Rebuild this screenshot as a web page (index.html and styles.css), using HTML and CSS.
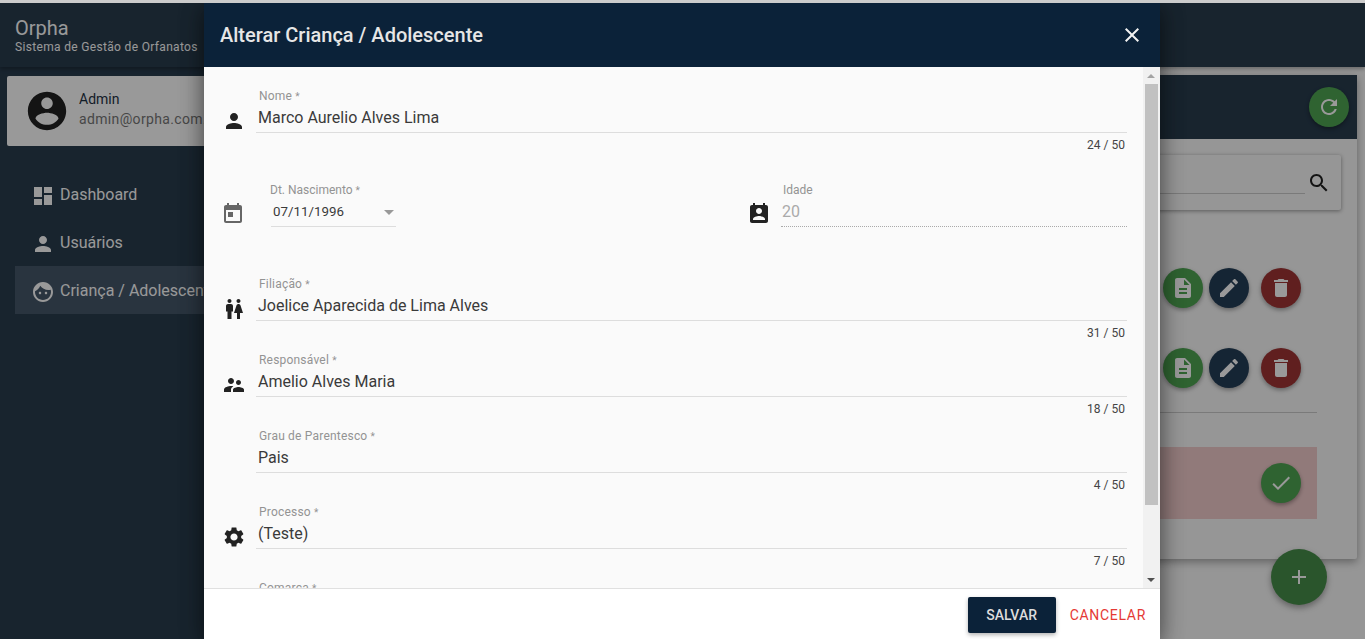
FILE: index.html
```html
<!DOCTYPE html>
<html lang="pt-BR">
<head>
<meta charset="utf-8">
<title>Orpha</title>
<link rel="stylesheet" href="styles.css">
</head>
<body>
<div class="strip"></div>
<div class="app">
  <header class="toolbar">
    <div class="brand">Orpha</div>
    <div class="tagline">Sistema de Gestão de Orfanatos</div>
  </header>
  <div class="shell">
    <aside class="sidebar">
      <div class="user">
        <svg class="avatar" viewBox="0 0 24 24"><path d="M12 2C6.48 2 2 6.48 2 12s4.48 10 10 10 10-4.48 10-10S17.52 2 12 2zm0 3c1.66 0 3 1.34 3 3s-1.34 3-3 3-3-1.34-3-3 1.34-3 3-3zm0 14.2c-2.5 0-4.71-1.28-6-3.22.03-1.99 4-3.08 6-3.08 1.99 0 5.97 1.09 6 3.08-1.29 1.94-3.5 3.22-6 3.22z"/></svg>
        <div class="user-text">
          <div class="user-name">Admin</div>
          <div class="user-mail">admin@orpha.com.br</div>
        </div>
      </div>
      <nav class="menu">
        <div class="menu-item"><svg class="menu-icon" viewBox="0 0 24 24"><path d="M3 13h8V3H3v10zm0 8h8v-6H3v6zm10 0h8V11h-8v10zm0-18v6h8V3h-8z"/></svg>Dashboard</div>
        <div class="menu-item"><svg class="menu-icon" viewBox="0 0 24 24"><path d="M12 12c2.21 0 4-1.79 4-4s-1.79-4-4-4-4 1.79-4 4 1.79 4 4 4zm0 2c-2.67 0-8 1.34-8 4v2h16v-2c0-2.66-5.33-4-8-4z"/></svg>Usuários</div>
        <div class="menu-item active"><svg class="menu-icon" viewBox="0 0 24 24"><path d="M9 11.75c-.69 0-1.25.56-1.25 1.25s.56 1.25 1.25 1.25 1.25-.56 1.25-1.25-.56-1.25-1.25-1.25zm6 0c-.69 0-1.25.56-1.25 1.25s.56 1.25 1.25 1.25 1.25-.56 1.25-1.25-.56-1.25-1.25-1.25zM12 2C6.48 2 2 6.48 2 12s4.48 10 10 10 10-4.48 10-10S17.52 2 12 2zm0 18c-4.41 0-8-3.59-8-8 0-.29.02-.58.05-.86 2.36-1.05 4.23-2.98 5.21-5.37C11.07 8.33 14.05 10 17.42 10c.78 0 1.53-.09 2.25-.26.21.71.33 1.47.33 2.26 0 4.41-3.59 8-8 8z"/></svg>Criança / Adolescente</div>
      </nav>
    </aside>
    <main class="main">
      <section class="card">
        <div class="card-head">
          <button class="fab-sm green"><svg viewBox="0 0 24 24"><path d="M17.65 6.35C16.2 4.9 14.21 4 12 4c-4.42 0-7.99 3.58-7.99 8s3.57 8 7.99 8c3.73 0 6.84-2.55 7.73-6h-2.08c-.82 2.33-3.04 4-5.65 4-3.31 0-6-2.69-6-6s2.69-6 6-6c1.66 0 3.14.69 4.22 1.78L13 11h7V4l-2.35 2.35z"/></svg></button>
        </div>
        <div class="search">
          <div class="search-line"></div>
          <svg class="search-icon" viewBox="0 0 24 24"><path d="M15.5 14h-.79l-.28-.27C15.41 12.59 16 11.11 16 9.5 16 5.91 13.09 3 9.5 3S3 5.91 3 9.5 5.91 16 9.5 16c1.61 0 3.09-.59 4.23-1.57l.27.28v.79l5 4.99L20.49 19l-4.99-5zm-6 0C7.01 14 5 11.99 5 9.5S7.01 5 9.5 5 14 7.01 14 9.5 11.99 14 9.5 14z"/></svg>
        </div>
        <div class="table-row">
          <button class="fab-sm green"><svg viewBox="0 0 24 24"><path d="M14 2H6c-1.1 0-1.99.9-1.99 2L4 20c0 1.1.89 2 1.99 2H18c1.1 0 2-.9 2-2V8l-6-6zm2 16H8v-2h8v2zm0-4H8v-2h8v2zm-3-5V3.5L18.5 9H13z"/></svg></button>
          <button class="fab-sm navy"><svg viewBox="0 0 24 24"><path d="M3 17.25V21h3.75L17.81 9.94l-3.75-3.75L3 17.25zM20.71 7.04c.39-.39.39-1.02 0-1.41l-2.34-2.34c-.39-.39-1.02-.39-1.41 0l-1.83 1.83 3.75 3.75 1.83-1.83z"/></svg></button>
          <button class="fab-sm red"><svg viewBox="0 0 24 24"><path d="M6 19c0 1.1.9 2 2 2h8c1.1 0 2-.9 2-2V7H6v12zM19 4h-3.5l-1-1h-5l-1 1H5v2h14V4z"/></svg></button>
        </div>
        <div class="table-row last">
          <button class="fab-sm green"><svg viewBox="0 0 24 24"><path d="M14 2H6c-1.1 0-1.99.9-1.99 2L4 20c0 1.1.89 2 1.99 2H18c1.1 0 2-.9 2-2V8l-6-6zm2 16H8v-2h8v2zm0-4H8v-2h8v2zm-3-5V3.5L18.5 9H13z"/></svg></button>
          <button class="fab-sm navy"><svg viewBox="0 0 24 24"><path d="M3 17.25V21h3.75L17.81 9.94l-3.75-3.75L3 17.25zM20.71 7.04c.39-.39.39-1.02 0-1.41l-2.34-2.34c-.39-.39-1.02-.39-1.41 0l-1.83 1.83 3.75 3.75 1.83-1.83z"/></svg></button>
          <button class="fab-sm red"><svg viewBox="0 0 24 24"><path d="M6 19c0 1.1.9 2 2 2h8c1.1 0 2-.9 2-2V7H6v12zM19 4h-3.5l-1-1h-5l-1 1H5v2h14V4z"/></svg></button>
        </div>
        <div class="alert-row">
          <button class="fab-sm green"><svg viewBox="0 0 24 24"><path d="M9 16.17L4.83 12l-1.42 1.41L9 19 21 7l-1.41-1.41z"/></svg></button>
        </div>
      </section>
    </main>
  </div>
  <button class="fab-add"><svg viewBox="0 0 24 24"><path d="M19 13h-6v6h-2v-6H5v-2h6V5h2v6h6v2z"/></svg></button>
  <div class="backdrop"></div>
  <div class="dialog">
    <div class="dialog-head">
      <h1 class="dialog-title">Alterar Criança / Adolescente</h1>
      <svg class="close" viewBox="0 0 24 24"><path d="M19 6.41L17.59 5 12 10.59 6.41 5 5 6.41 10.59 12 5 17.59 6.41 19 12 13.41 17.59 19 19 17.59 13.41 12z"/></svg>
    </div>
    <div class="dialog-body">
      <form class="form">
        <div class="row">
          <svg class="icon" viewBox="0 0 24 24"><path d="M12 12c2.21 0 4-1.79 4-4s-1.79-4-4-4-4 1.79-4 4 1.79 4 4 4zm0 2c-2.67 0-8 1.34-8 4v2h16v-2c0-2.66-5.33-4-8-4z"/></svg>
          <div class="field">
            <div class="label">Nome <span class="req">*</span></div>
            <div class="value">Marco Aurelio Alves Lima</div>
            <div class="count">24 / 50</div>
          </div>
        </div>
        <div class="row-date">
          <div class="group-date">
            <svg class="icon icon-cal" viewBox="0 0 24 24"><path d="M19 3h-1V1h-2v2H8V1H6v2H5c-1.11 0-1.99.9-1.99 2L3 19c0 1.1.89 2 2 2h14c1.1 0 2-.9 2-2V5c0-1.1-.9-2-2-2zm0 16H5V8h14v11zM7 10h5v5H7z"/></svg>
            <div class="field-date">
              <div class="label">Dt. Nascimento <span class="req">*</span></div>
              <div class="value value-date">07/11/1996<span class="caret"></span></div>
            </div>
          </div>
          <div class="group-age">
            <svg class="icon" viewBox="0 0 24 24"><path d="M19 3h-1V1h-2v2H8V1H6v2H5c-1.11 0-2 .9-2 2v14c0 1.1.89 2 2 2h14c1.1 0 2-.9 2-2V5c0-1.1-.9-2-2-2zm-7 3c1.66 0 3 1.34 3 3s-1.34 3-3 3-3-1.34-3-3 1.34-3 3-3zm6 12H6v-1c0-2 4-3.1 6-3.1s6 1.1 6 3.1v1z"/></svg>
            <div class="field-age">
              <div class="label">Idade</div>
              <div class="value value-age">20</div>
            </div>
          </div>
        </div>
        <div class="row">
          <svg class="icon" viewBox="0 0 24 24"><path d="M5.5 22v-7.5H4V9c0-1.1.9-2 2-2h3c1.1 0 2 .9 2 2v5.5H9.5V22h-4zM18 22v-6h3l-2.54-7.63C18.18 7.55 17.42 7 16.56 7h-.12c-.86 0-1.63.55-1.9 1.37L12 16h3v6h3zM7.5 6c1.11 0 2-.89 2-2s-.89-2-2-2-2 .89-2 2 .89 2 2 2zm9 0c1.11 0 2-.89 2-2s-.89-2-2-2-2 .89-2 2 .89 2 2 2z"/></svg>
          <div class="field">
            <div class="label">Filiação <span class="req">*</span></div>
            <div class="value">Joelice Aparecida de Lima Alves</div>
            <div class="count">31 / 50</div>
          </div>
        </div>
        <div class="row">
          <svg class="icon" viewBox="0 0 24 24"><path d="M16.5 12c1.38 0 2.49-1.12 2.49-2.5S17.88 7 16.5 7C15.12 7 14 8.12 14 9.5s1.12 2.5 2.5 2.5zM9 11c1.66 0 2.99-1.34 2.99-3S10.66 5 9 5C7.34 5 6 6.34 6 8s1.34 3 3 3zm7.5 3c-1.83 0-5.5.92-5.5 2.75V19h11v-2.25c0-1.83-3.67-2.75-5.5-2.75zM9 13c-2.33 0-7 1.17-7 3.5V19h7v-2.25c0-.85.33-2.34 2.37-3.47C10.5 13.1 9.66 13 9 13z"/></svg>
          <div class="field">
            <div class="label">Responsável <span class="req">*</span></div>
            <div class="value">Amelio Alves Maria</div>
            <div class="count">18 / 50</div>
          </div>
        </div>
        <div class="row">
          <div class="icon"></div>
          <div class="field">
            <div class="label">Grau de Parentesco <span class="req">*</span></div>
            <div class="value">Pais</div>
            <div class="count">4 / 50</div>
          </div>
        </div>
        <div class="row">
          <svg class="icon" viewBox="0 0 24 24"><path d="M19.14 12.94c.04-.3.06-.61.06-.94 0-.32-.02-.64-.07-.94l2.03-1.58c.18-.14.23-.41.12-.61l-1.92-3.32c-.12-.22-.37-.29-.59-.22l-2.39.96c-.5-.38-1.03-.7-1.62-.94l-.36-2.54c-.04-.24-.24-.41-.48-.41h-3.84c-.24 0-.43.17-.47.41l-.36 2.54c-.59.24-1.13.57-1.62.94l-2.39-.96c-.22-.08-.47 0-.59.22L2.74 8.87c-.12.21-.08.47.12.61l2.03 1.58c-.05.3-.09.63-.09.94s.02.64.07.94l-2.03 1.58c-.18.14-.23.41-.12.61l1.92 3.32c.12.22.37.29.59.22l2.39-.96c.5.38 1.03.7 1.62.94l.36 2.54c.05.24.24.41.48.41h3.84c.24 0 .44-.17.47-.41l.36-2.54c.59-.24 1.13-.56 1.62-.94l2.39.96c.22.08.47 0 .59-.22l1.92-3.32c.12-.22.07-.47-.12-.61l-2.01-1.58zM12 15.6c-1.98 0-3.6-1.62-3.6-3.6s1.62-3.6 3.6-3.6 3.6 1.62 3.6 3.6-1.62 3.6-3.6 3.6z"/></svg>
          <div class="field">
            <div class="label">Processo <span class="req">*</span></div>
            <div class="value">(Teste)</div>
            <div class="count">7 / 50</div>
          </div>
        </div>
        <div class="row">
          <div class="icon"></div>
          <div class="field">
            <div class="label">Comarca <span class="req">*</span></div>
          </div>
        </div>
      </form>
      <div class="scrollbar">
        <div class="sb-btn"><span class="sb-up"></span></div>
        <div class="sb-thumb"></div>
        <div class="sb-rest"></div>
        <div class="sb-btn"><span class="sb-down"></span></div>
      </div>
    </div>
    <div class="dialog-foot">
      <button class="btn-save">SALVAR</button>
      <button class="btn-cancel">CANCELAR</button>
    </div>
  </div>
</div>
</body>
</html>
```
FILE: styles.css
```css
* { box-sizing: border-box; }
html, body { margin: 0; padding: 0; height: 100%; overflow: hidden; }
body { font-family: Roboto, "Liberation Sans", sans-serif; background: #fafafa; }
button { font-family: inherit; border: 0; padding: 0; cursor: pointer; }

.strip { height: 3px; background: #ccc; }
.app { position: relative; height: 636px; overflow: hidden; display: flex; flex-direction: column; background: #fafafa; }

.toolbar { height: 64px; flex: none; background: #283c4e; color: #fff; padding: 14px 15px 0; box-shadow: 0 2px 4px rgba(0,0,0,.3); position: relative; z-index: 1; }
.brand { font-size: 20px; line-height: 22px; }
.tagline { font-size: 12px; line-height: 14px; margin-top: 1px; letter-spacing: .33px; }

.shell { flex: 1; display: flex; min-height: 0; }
.sidebar { width: 260px; flex: none; background: #283c4e; padding: 9px 0 0 7px; }
.user { height: 70px; background: #fff; border-radius: 2px; display: flex; align-items: center; padding-left: 17px; margin-right: 8px; }
.avatar { width: 46px; height: 46px; fill: #222; flex: none; }
.user-text { margin: -4px 0 0 9px; }
.user-name { font-size: 14px; line-height: 20px; color: #1f3244; }
.user-mail { font-size: 14px; line-height: 20px; color: #777; letter-spacing: .35px; white-space: nowrap; }
.menu { margin: 24px 0 0 8px; }
.menu-item { height: 48px; display: flex; align-items: center; color: #fff; font-size: 16px; padding-left: 16px; }
.menu-item.active { background: #45576a; }
.menu-icon { width: 24px; height: 24px; fill: #fff; margin-right: 5px; margin-top: 4px; flex: none; }

.main { flex: 1; padding: 8px 8px 0 0; min-width: 0; }
.card { height: 484px; background: #fafafa; border-radius: 2px; box-shadow: 0 3px 8px rgba(0,0,0,.35); }
.card-head { height: 64px; background: #283c4e; display: flex; justify-content: flex-end; align-items: center; padding-right: 8px; }
.search { height: 55px; margin: 16px 16px 0 16px; background: #fafafa; border-radius: 2px; box-shadow: 0 1px 4px rgba(0,0,0,.4); display: flex; align-items: center; padding-right: 10px; }
.search-line { flex: 1; height: 1px; background: #ccc; margin: 22px 1px 0 0; }
.search-icon { width: 24px; height: 24px; fill: #222; margin-left: 1px; }
.table-row { height: 80px; margin: 38px 40px 0 0; padding-right: 16px; display: flex; justify-content: flex-end; align-items: center; gap: 6px; }
.table-row + .table-row { margin-top: 0; height: 85px; padding-bottom: 5px; border-bottom: 1px solid #ccc; }
.alert-row { height: 72px; margin: 34px 40px 0 0; padding-right: 16px; background: #f2cccc; display: flex; justify-content: flex-end; align-items: center; }
.fab-sm { width: 40px; height: 40px; border-radius: 50%; display: flex; align-items: center; justify-content: center; box-shadow: 0 2px 4px rgba(0,0,0,.35); flex: none; }
.fab-sm svg { width: 24px; height: 24px; fill: #fff; }
.fab-sm.green { background: #4fa553; }
.fab-sm.navy { background: #243e58; }
.fab-sm.red { background: #a03434; margin-left: 6px; }

.fab-add { position: absolute; left: 1271px; top: 546px; width: 56px; height: 56px; border-radius: 50%; background: #478e4a; display: flex; align-items: center; justify-content: center; box-shadow: 0 3px 6px rgba(0,0,0,.35); }
.fab-add svg { width: 24px; height: 24px; fill: #fff; }

.backdrop { position: absolute; inset: 0; background: rgba(0,0,0,.4); z-index: 2; }
.dialog { position: absolute; left: 204px; top: 0; width: 956px; height: 636px; z-index: 3; display: flex; flex-direction: column; background: #fff; box-shadow: 0 8px 20px rgba(0,0,0,.4), 0 0 24px rgba(0,0,0,.25); }
.dialog-head { height: 64px; flex: none; background: #0b2239; color: #e6e6e6; display: flex; align-items: center; justify-content: space-between; padding: 0 16px; }
.dialog-title { margin: 0; font-size: 20px; font-weight: 500; }
.close { width: 24px; height: 24px; fill: #f2f2f2; }

.dialog-body { flex: 1; min-height: 0; display: flex; background: #fafafa; }
.form { flex: 1; min-width: 0; overflow: hidden; padding: 16px 16px 0 18px; }
.row { height: 76px; display: flex; gap: 10px; }
.icon { width: 24px; height: 24px; flex: none; fill: #222; margin-top: 26px; }
.icon-cal { fill: #666; margin-top: 43px; margin-left: -1px; }
.field { flex: 1; min-width: 0; }
.label { margin: 6px 0 0 3px; font-size: 12px; line-height: 14px; color: #939393; letter-spacing: .2px; }
.req { font-size: 10px; line-height: 0; letter-spacing: 0; }
.value { height: 30px; border-bottom: 1px solid #ddd; padding: 4px 2px 0; font-size: 16px; line-height: 22px; color: #3a3a3a; }
.count { font-size: 12px; line-height: 12px; margin-top: 6px; padding-right: 2px; text-align: right; color: #444; }

.row-date { height: 112px; display: flex; }
.group-date { width: 525px; display: flex; }
.field-date { width: 125px; margin-left: 26px; padding-top: 18px; }
.field-date .label { margin-left: -1px; letter-spacing: 0; }
.value-date { position: relative; padding: 4px 2px 0; font-size: 13.333px; }
.caret { position: absolute; right: 2px; top: 13px; width: 0; height: 0; border: 5px solid transparent; border-top-color: #999; border-bottom: 0; }
.group-age { flex: 1; display: flex; gap: 10px; }
.group-age .icon { margin-top: 43px; }
.field-age { flex: 1; padding-top: 18px; }
.field-age .label { margin-left: 2px; letter-spacing: 0; }
.value-age { color: #aaa; border-bottom: 1px dotted #aaa; padding-left: 1px; }

.scrollbar { width: 17px; flex: none; display: flex; flex-direction: column; background: #f1f1f1; }
.sb-btn { height: 17px; flex: none; display: flex; align-items: center; justify-content: center; padding-right: 1px; }
.sb-up, .sb-down { width: 0; height: 0; border: 4px solid transparent; }
.sb-up { border-top: 0; border-bottom-color: #a3a3a3; }
.sb-down { border-bottom: 0; border-top-color: #505050; }
.sb-thumb { height: 421px; margin: 0 2px 0 2px; background: #c1c1c1; flex: none; }
.sb-rest { flex: 1; }

.dialog-foot { height: 51px; flex: none; background: #fff; border-top: 1px solid #e0e0e0; display: flex; align-items: center; justify-content: flex-end; padding: 2px 14px 0 0; gap: 14px; }
.btn-save { width: 88px; height: 36px; border-radius: 2px; background: #0b2239; color: #ddd; font-size: 14px; font-weight: 500; box-shadow: 0 2px 4px rgba(0,0,0,.3); }
.btn-cancel { background: none; color: #e53935; font-size: 14px; line-height: 36px; letter-spacing: .7px; }
```
